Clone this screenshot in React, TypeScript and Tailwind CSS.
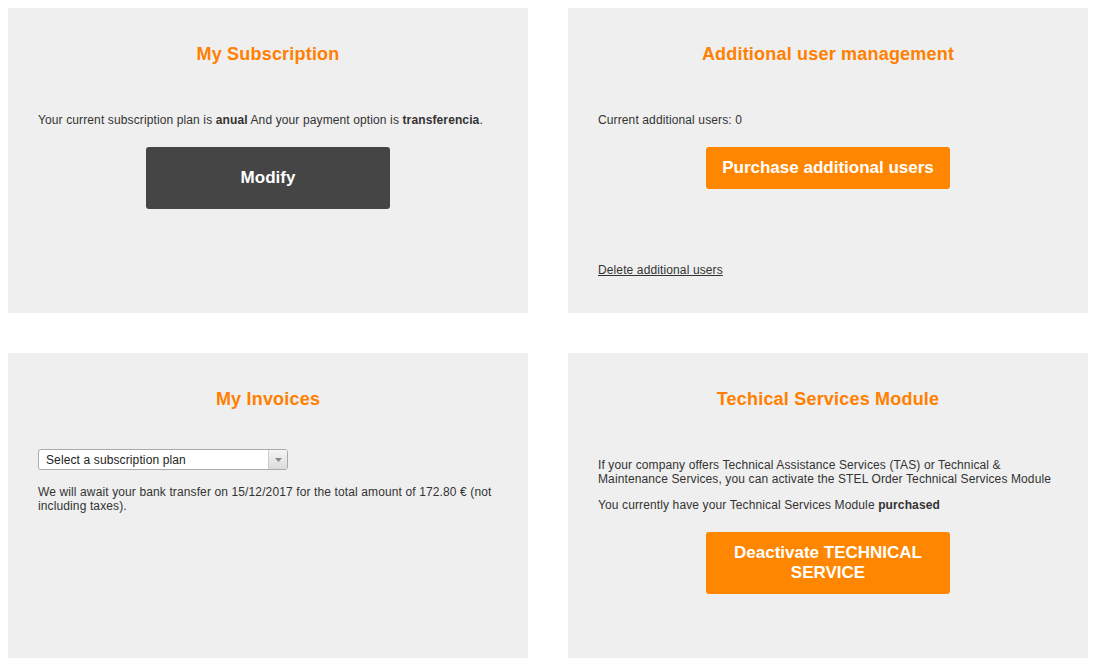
export default function App() {
  return (
    <div className="min-h-screen bg-white p-2 font-['Liberation_Sans',Arial,sans-serif] text-[12px] tracking-[0.12px] text-[#333]">
      <div className="grid grid-cols-[520px_520px] gap-x-10 gap-y-10">
        {/* My Subscription */}
        <section className="h-[305px] bg-[#efefef] px-[30px] pt-[35px]">
          <h2 className="text-center text-[18px] leading-[22px] font-bold tracking-[0.2px] text-[#ff8000]">My Subscription</h2>
          <p className="mt-[48px] leading-[14px]">
            Your current subscription plan is <b>anual</b> And your payment option is <b>transferencia</b>.
          </p>
          <div className="mt-[20px] flex justify-center">
            <button className="h-[62px] w-[244px] rounded-[3px] bg-[#454545] text-[17px] font-bold tracking-normal text-white">Modify</button>
          </div>
        </section>

        {/* Additional user management */}
        <section className="h-[305px] bg-[#efefef] px-[30px] pt-[35px]">
          <h2 className="text-center text-[18px] leading-[22px] font-bold tracking-[0.2px] text-[#ff8000]">Additional user management</h2>
          <p className="mt-[48px] leading-[14px]">Current additional users: 0</p>
          <div className="mt-[20px] flex justify-center">
            <button className="h-[42px] w-[244px] rounded-[3px] bg-[#ff8600] text-[17px] font-bold tracking-normal text-white">Purchase additional users</button>
          </div>
          <a href="#" className="mt-[74px] block w-fit leading-[14px] text-[#333] underline">Delete additional users</a>
        </section>

        {/* My Invoices */}
        <section className="h-[305px] bg-[#efefef] px-[30px] pt-[35px]">
          <h2 className="text-center text-[18px] leading-[22px] font-bold tracking-[0.2px] text-[#ff8000]">My Invoices</h2>
          <div className="mt-[39px] flex h-[21px] w-[250px] items-stretch overflow-hidden rounded-[3px] border border-[#aaa] bg-white">
            <span className="flex flex-1 items-center pl-[7px] text-[12px] text-[#222]">Select a subscription plan</span>
            <span className="flex w-[19px] items-center justify-center border-l border-[#ccc] bg-gradient-to-b from-[#f4f4f4] to-[#dcdcdc]">
              <svg width="7" height="4" viewBox="0 0 7 4"><path d="M0 0h7L3.5 4z" fill="#888" /></svg>
            </span>
          </div>
          <p className="mt-[15px] leading-[14px]">
            We will await your bank transfer on 15/12/2017 for the total amount of 172.80 € (not including taxes).
          </p>
        </section>

        {/* Techical Services Module */}
        <section className="h-[305px] bg-[#efefef] px-[30px] pt-[35px]">
          <h2 className="text-center text-[18px] leading-[22px] font-bold tracking-[0.2px] text-[#ff8000]">Techical Services Module</h2>
          <p className="mt-[48px] leading-[14px]">
            If your company offers Technical Assistance Services (TAS) or Technical &amp; Maintenance Services, you can activate the STEL Order Technical Services Module
          </p>
          <p className="mt-[12px] leading-[14px]">
            You currently have your Technical Services Module <b>purchased</b>
          </p>
          <div className="mt-[20px] flex justify-center">
            <button className="h-[62px] w-[244px] rounded-[3px] bg-[#ff8600] px-6 text-[17px] leading-[20px] font-bold tracking-normal text-white">
              Deactivate TECHNICAL SERVICE
            </button>
          </div>
        </section>
      </div>
    </div>
  );
}
